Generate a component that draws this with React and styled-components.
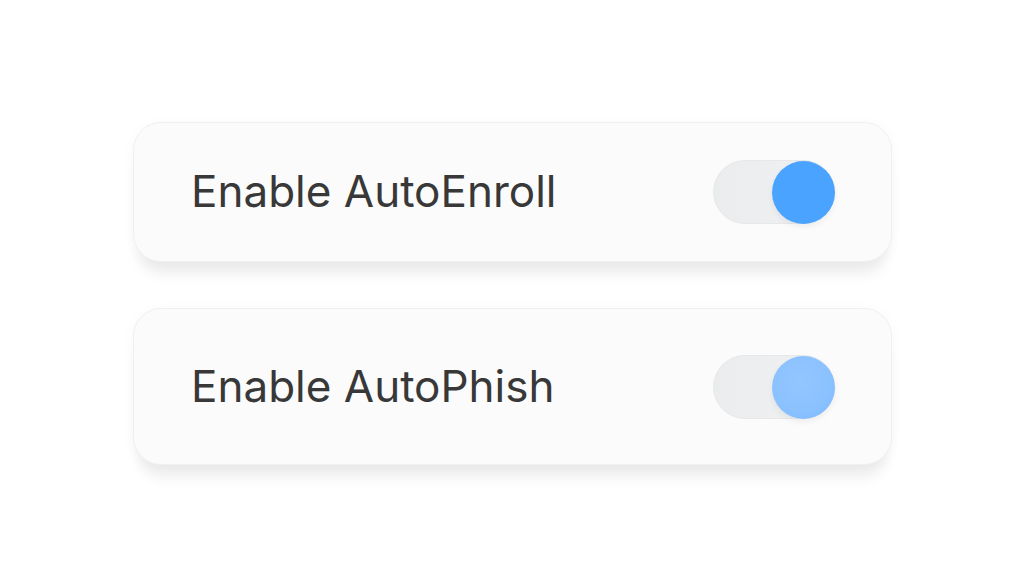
import React from 'react';
import styled, { createGlobalStyle } from 'styled-components';

const GlobalStyle = createGlobalStyle`
  body {
    margin: 0;
    background: #ffffff;
    font-family: Inter, "Noto Sans", sans-serif;
  }
`;

const Page = styled.div`
  width: 1025px;
  height: 575px;
  box-sizing: border-box;
  padding: 122px 0 0 133px;
  display: flex;
  flex-direction: column;
  gap: 46px;
`;

const Card = styled.div`
  width: 759px;
  height: ${props => props.height}px;
  box-sizing: border-box;
  padding: 0 56px 0 57px;
  display: flex;
  align-items: center;
  justify-content: space-between;
  background: #fbfbfb;
  border: 1px solid #f0f0f0;
  border-radius: 28px;
  box-shadow: 0 18px 14px -6px rgba(0, 0, 0, 0.07), 0 2px 14px rgba(0, 0, 0, 0.03);
`;

const Label = styled.div`
  font-size: 44px;
  color: #383838;
  margin-top: -2px;
`;

const Track = styled.div`
  position: relative;
  width: 122px;
  height: 64px;
  box-sizing: border-box;
  border-radius: 32px;
  background: linear-gradient(90deg, #eaecee 0%, #eff1f3 100%);
  border: 1px solid #e6e8ea;
`;

const Knob = styled.div`
  position: absolute;
  top: 0;
  right: -1px;
  width: 63px;
  height: 63px;
  border-radius: 50%;
  background: ${props =>
    props.soft
      ? 'radial-gradient(circle at 45% 40%, #93c6ff 0%, #8ac1ff 60%, #7ab7ff 100%)'
      : '#4aa3ff'};
  box-shadow: 0 3px 6px rgba(0, 0, 0, 0.06);
`;

function ToggleRow({ label, height, soft }) {
  return (
    <Card height={height}>
      <Label>{label}</Label>
      <Track>
        <Knob soft={soft} />
      </Track>
    </Card>
  );
}

export default function App() {
  return (
    <>
      <GlobalStyle />
      <Page>
        <ToggleRow label="Enable AutoEnroll" height={140} />
        <ToggleRow label="Enable AutoPhish" height={157} soft />
      </Page>
    </>
  );
}
